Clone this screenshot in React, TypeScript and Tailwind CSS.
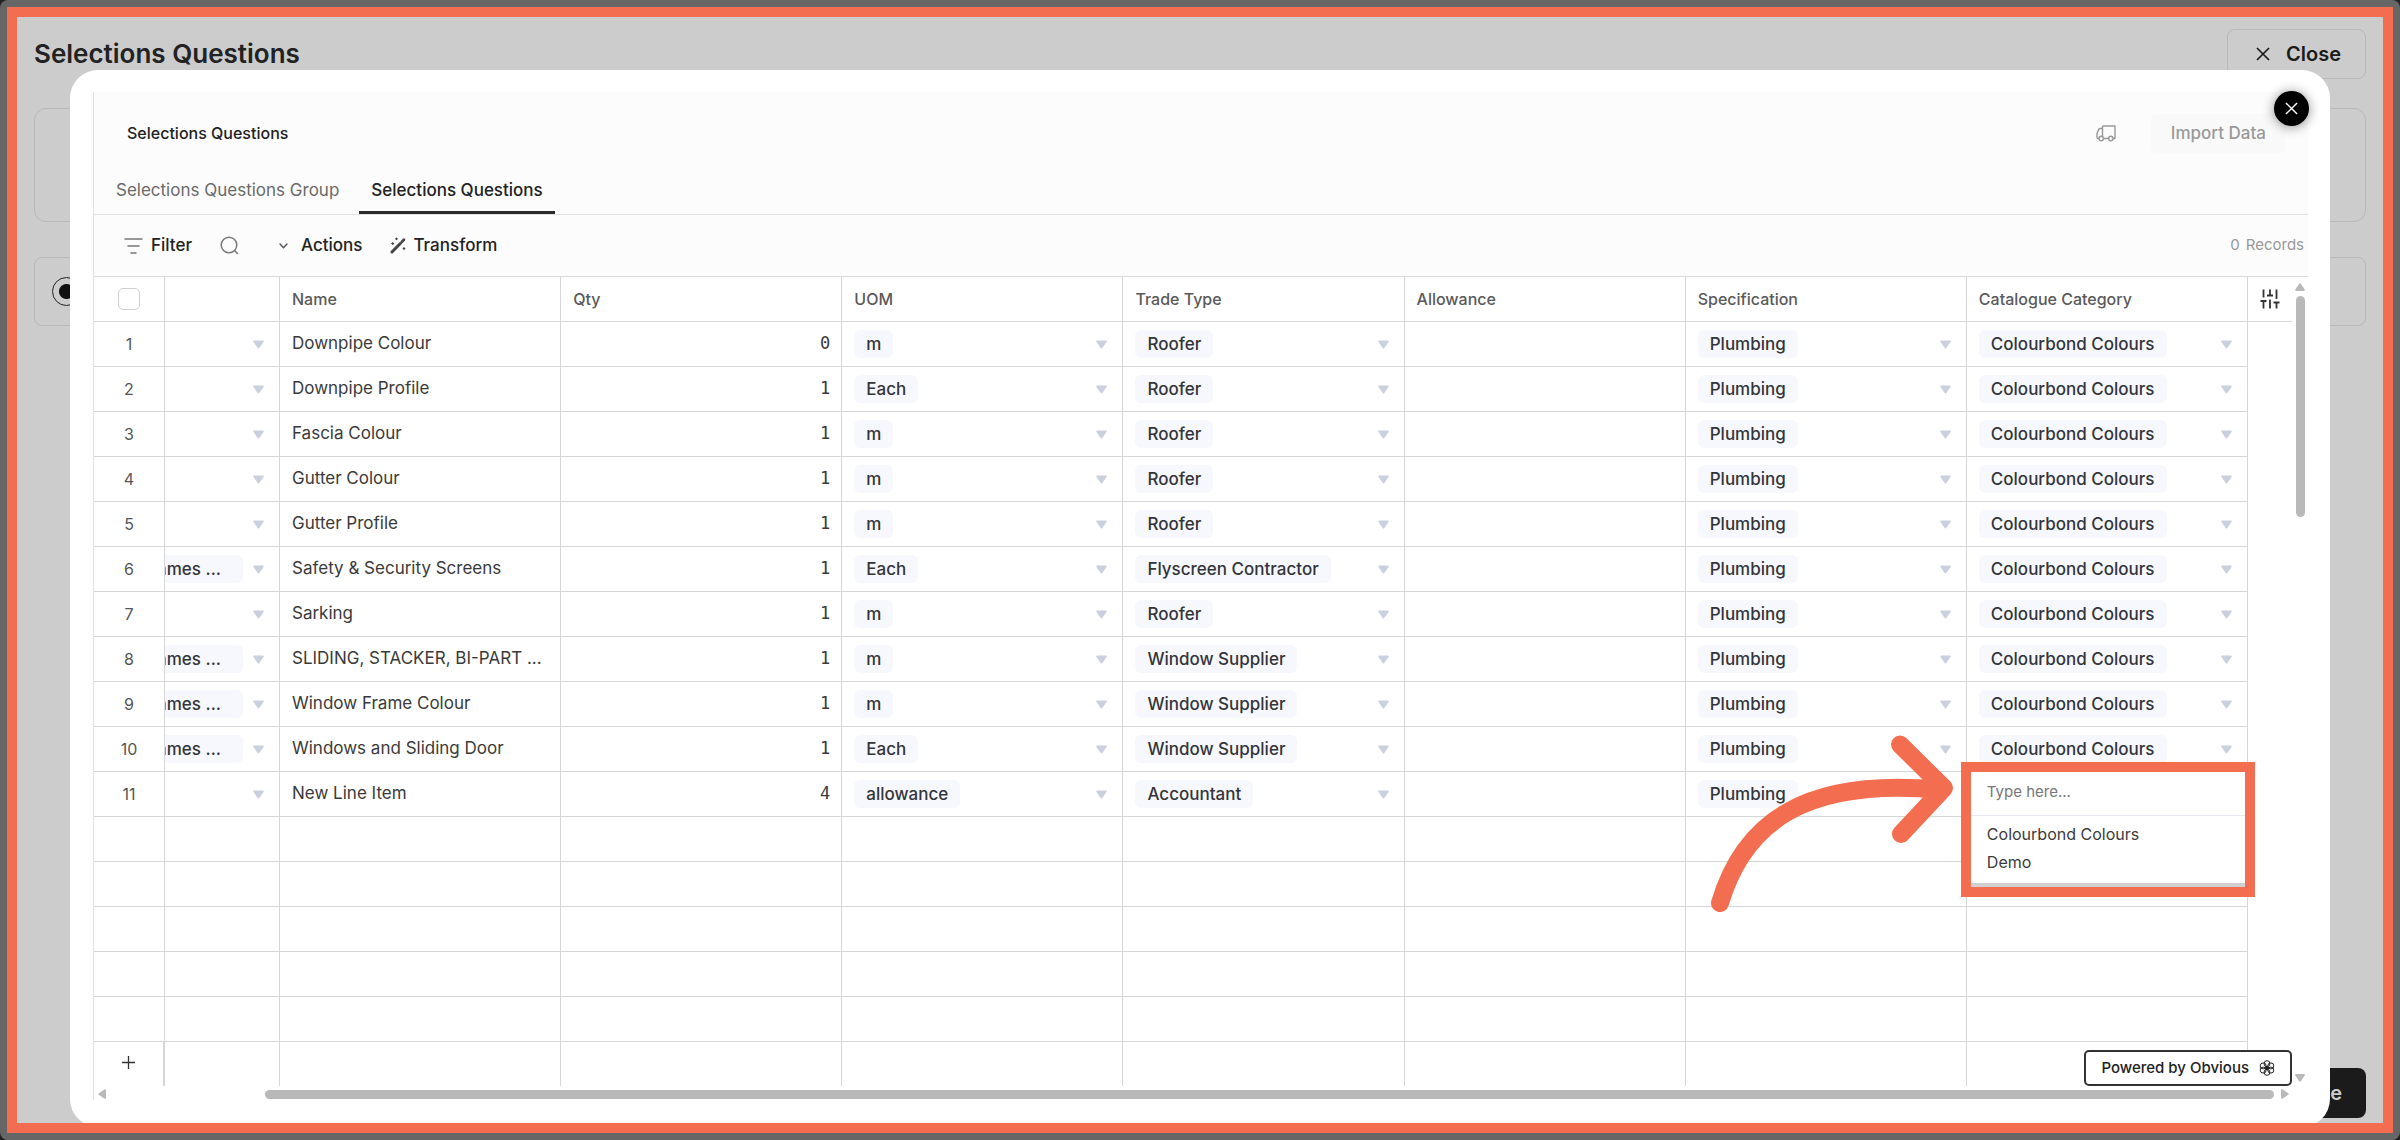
type Row = { group?: boolean; name: string; qty: number; uom: string; trade: string; category: boolean };

const rows: Row[] = [
  { name: "Downpipe Colour", qty: 0, uom: "m", trade: "Roofer", category: true },
  { name: "Downpipe Profile", qty: 1, uom: "Each", trade: "Roofer", category: true },
  { name: "Fascia Colour", qty: 1, uom: "m", trade: "Roofer", category: true },
  { name: "Gutter Colour", qty: 1, uom: "m", trade: "Roofer", category: true },
  { name: "Gutter Profile", qty: 1, uom: "m", trade: "Roofer", category: true },
  { group: true, name: "Safety & Security Screens", qty: 1, uom: "Each", trade: "Flyscreen Contractor", category: true },
  { name: "Sarking", qty: 1, uom: "m", trade: "Roofer", category: true },
  { group: true, name: "SLIDING, STACKER, BI-PART ...", qty: 1, uom: "m", trade: "Window Supplier", category: true },
  { group: true, name: "Window Frame Colour", qty: 1, uom: "m", trade: "Window Supplier", category: true },
  { group: true, name: "Windows and Sliding Door", qty: 1, uom: "Each", trade: "Window Supplier", category: true },
  { name: "New Line Item", qty: 4, uom: "allowance", trade: "Accountant", category: false },
];

const headings = ["Name", "Qty", "UOM", "Trade Type", "Allowance", "Specification", "Catalogue Category"];
const blankRows = [0, 1, 2, 3, 4];
const cell = "border-r border-b border-[#d6d6d6] p-0";

function Caret() {
  return (
    <svg className="ml-auto shrink-0" width="11" height="9" viewBox="0 0 11 9" fill="#cbd0df" aria-hidden="true">
      <path d="M1 0.5h9a.8.8 0 0 1 .7 1.2L6.300 7.900a1 1 0 0 1-1.600 0L.3 1.700A.8.8 0 0 1 1 .5z" />
    </svg>
  );
}

function Triangle({ className }: { className: string }) {
  return (
    <svg className={className} width="10" height="8" viewBox="0 0 10 8" fill="#b9b9b9" aria-hidden="true">
      <path d="M4.400 0.500Q5 0 5.600 0.500L9.800 6.600Q10 8 9 8H1Q0 8 .2 6.600z" />
    </svg>
  );
}

function Cross({ size, width }: { size: number; width: number }) {
  return (
    <svg width={size} height={size} viewBox="0 0 14 14" fill="none" stroke="currentColor" strokeWidth={width} aria-hidden="true">
      <path d="M1 1l12 12M13 1L1 13" />
    </svg>
  );
}

function ChipCell({ label }: { label: string }) {
  return (
    <div className="flex h-11 items-center pr-[15px] pl-3">
      <span className="rounded-md bg-[#f7f8fd] px-3 leading-7 font-medium whitespace-nowrap text-[#33353a]">{label}</span>
      <Caret />
    </div>
  );
}

function PointerArrow() {
  return (
    <svg
      className="pointer-events-none absolute -top-10 right-full z-10 mr-1"
      width="257"
      height="190"
      viewBox="0 0 257 190"
      fill="none"
      stroke="#f36e50"
      strokeWidth="18"
      strokeLinecap="round"
      strokeLinejoin="round"
      aria-hidden="true"
    >
      <path d="M14 171C38 90 100 45 235 58M194 12.500L238 56L195 102" />
    </svg>
  );
}

function Dropdown() {
  return (
    <div className="absolute -top-2.5 -right-2 -left-1.5 z-10 border-10 border-[#f36e50] bg-white">
      <input
        type="text"
        aria-label="Search catalogue category"
        placeholder="Type here..."
        className="block h-11 w-full border-b border-[#e6e8f0] px-4 pb-1 text-[15px] text-[#444] outline-none placeholder:text-[#777]"
      />
      <ul role="listbox" aria-label="Catalogue category" className="border-b-4 border-[#d0d0d0] pt-1 pb-[7px] text-base leading-7 text-[#3b3b3b]">
        <li role="option" aria-selected="false" className="px-4">Colourbond Colours</li>
        <li role="option" aria-selected="false" className="px-4">Demo</li>
      </ul>
    </div>
  );
}

function Grid() {
  return (
    <table className="w-full table-fixed border-separate border-spacing-0 text-[17px] text-[#3a3a3a]">
      <colgroup>
        <col className="w-[71px]" />
        <col className="w-[115px]" />
        {headings.map((h) => (
          <col key={h} />
        ))}
        <col className="w-11" />
      </colgroup>
      <thead>
        <tr className="h-[45px] text-left text-base text-[#5a5a5a]">
          <th className={cell}>
            <input
              type="checkbox"
              aria-label="Select all rows"
              className="mx-auto block size-[22px] appearance-none rounded-[5px] border border-[#cfcfcf] bg-white"
            />
          </th>
          <th className={cell} aria-label="Group" />
          {headings.map((h) => (
            <th key={h} className={`${cell} pl-3 font-medium`}>
              {h}
            </th>
          ))}
          <th className="border-b border-[#d6d6d6] p-0">
            <button type="button" aria-label="Column settings" className="mx-auto block">
              <svg width="20" height="20" viewBox="0 0 20 20" fill="none" stroke="#333" strokeWidth="1.8" aria-hidden="true">
                <path d="M3.500 .5v8M3.500 12v7.500M.5 12h6M10 .5v6M7 6.500h6M10 10.500v9M16.500 .5v9.500M16.500 13.500v6M13.500 13.500h6" />
              </svg>
            </button>
          </th>
        </tr>
      </thead>
      <tbody>
        {rows.map((r, i) => (
          <tr key={r.name} className="h-[45px]">
            <td className={`${cell} text-center text-base text-[#555]`}>{i + 1}</td>
            <td className={cell}>
              <div className="flex h-11 items-center overflow-hidden pr-[15px]">
                {r.group && (
                  <span className="-ml-3 flex w-[90px] justify-end rounded-md bg-[#f7f8fd] pr-[22px] leading-7 font-medium whitespace-nowrap text-[#33353a]">
                    Frames ...
                  </span>
                )}
                <Caret />
              </div>
            </td>
            <td className={cell}>
              <div className="flex h-11 items-center pl-3 whitespace-nowrap">{r.name}</div>
            </td>
            <td className={cell}>
              <div className="flex h-11 items-center justify-end pr-[11px] font-['DejaVu_Sans_Mono',monospace]">{r.qty}</div>
            </td>
            <td className={cell}>
              <ChipCell label={r.uom} />
            </td>
            <td className={cell}>
              <ChipCell label={r.trade} />
            </td>
            <td className={cell} />
            <td className={cell}>
              <ChipCell label="Plumbing" />
            </td>
            {r.category ? (
              <td className={cell}>
                <ChipCell label="Colourbond Colours" />
              </td>
            ) : (
              <td className={`${cell} relative`}>
                <PointerArrow />
                <Dropdown />
              </td>
            )}
            <td />
          </tr>
        ))}
        {blankRows.map((n) => (
          <tr key={n} className="h-[45px]">
            <td className={cell} />
            <td className={cell} />
            {headings.map((h) => (
              <td key={h} className={cell} />
            ))}
            <td />
          </tr>
        ))}
        <tr className="h-11">
          <td className="border-r-2 border-[#d6d6d6] p-0 pb-1">
            <button type="button" aria-label="Add row" className="mx-auto block text-[#333]">
              <svg width="13" height="13" viewBox="0 0 13 13" stroke="currentColor" strokeWidth="1.3" aria-hidden="true">
                <path d="M6.500 0v13M0 6.500h13" />
              </svg>
            </button>
          </td>
          <td className="border-r border-[#d6d6d6]" />
          {headings.map((h) => (
            <td key={h} className="border-r border-[#d6d6d6]" />
          ))}
          <td />
        </tr>
      </tbody>
    </table>
  );
}

function Toolbar() {
  return (
    <div className="flex h-[62px] items-center border-b border-[#dcdcdc] bg-[#fcfcfc] pr-1 pl-[30px] text-[17px] font-medium text-[#222]">
      <button type="button" className="flex items-center gap-2">
        <svg width="19" height="18" viewBox="0 0 19 18" fill="none" stroke="#777" strokeWidth="1.5" strokeLinecap="round" aria-hidden="true">
          <path d="M1 2h17M4 9h11M7 16h5" />
        </svg>
        Filter
      </button>
      <button type="button" aria-label="Search" className="ml-7">
        <svg width="19" height="19" viewBox="0 0 19 19" fill="none" stroke="#777" strokeWidth="1.5" strokeLinecap="round" aria-hidden="true">
          <circle cx="9" cy="9" r="7.8" />
          <path d="M14.500 14.500l3 3" />
        </svg>
      </button>
      <button type="button" className="ml-10 flex items-center gap-[13px]">
        <svg width="9" height="6" viewBox="0 0 9 6" fill="none" stroke="#555" strokeWidth="1.4" strokeLinecap="round" strokeLinejoin="round" aria-hidden="true">
          <path d="M1 1l3.500 3.700L8 1" />
        </svg>
        Actions
      </button>
      <button type="button" className="ml-7 flex items-center gap-[7px]">
        <svg width="16" height="17" viewBox="0 0 16 17" fill="none" stroke="#444" strokeLinecap="round" strokeLinejoin="round" aria-hidden="true">
          <path d="M2 15L10.300 6.500" strokeWidth="3" />
          <path d="M11.800 4.900L13.900 2.700" strokeWidth="2.800" />
          <path d="M6.500 1v1.600M5.700 1.800h1.600M2.700 5.700v1.800M1.800 6.600h1.800M14 10.600v1.800M13.100 11.500h1.800" strokeWidth="1.200" />
        </svg>
        Transform
      </button>
      <p className="ml-auto flex gap-1.5 text-[15px] font-normal text-[#999]">
        <span>0</span>
        <span>Records</span>
      </p>
    </div>
  );
}

function PanelHeader() {
  return (
    <header className="flex h-[123px] flex-col justify-between border-b border-[#e2e2e2] bg-[#fcfcfc] pt-[22px]">
      <div className="flex h-[39px] items-center pr-[22px] pl-[33px]">
        <h2 className="pb-0.5 text-base font-medium text-[#222]">Selections Questions</h2>
        <button type="button" aria-label="Delivery" className="ml-auto text-[#999]">
          <svg width="20" height="17" viewBox="0 0 20 17" fill="none" stroke="currentColor" strokeWidth="1.4" strokeLinejoin="round" aria-hidden="true">
            <path d="M6.500 1H19v12.500h-2M6.500 11.500V1M12.600 13.500H7.500M6.500 3.500H4.200Q3.200 3.500 2.800 4.400L1.300 7.600Q1 8.200 1 9v3.500q0 1 1 1h1" />
            <circle cx="5.200" cy="13.500" r="2.200" />
            <circle cx="14.800" cy="13.500" r="2.200" />
          </svg>
        </button>
        <button type="button" className="ml-[35px] h-full rounded-md bg-[#f9f9f9] px-5 text-[17px] font-medium text-[#999]">
          Import Data
        </button>
      </div>
      <nav className="flex gap-2 pl-[10px] text-[17px]" aria-label="Sheets">
        <button type="button" className="h-[43px] border-b-3 border-transparent px-3 text-[#6a6a6a]">
          Selections Questions Group
        </button>
        <button type="button" aria-current="page" className="h-[43px] border-b-3 border-[#2a2a2a] px-3 font-medium text-[#222]">
          Selections Questions
        </button>
      </nav>
    </header>
  );
}

function PoweredBy() {
  return (
    <a href="#" className="absolute right-0 bottom-0 z-20 flex h-9 items-center gap-2.5 rounded-[5px] border-2 border-[#333] bg-white px-[15px] text-[15px] font-medium text-[#222]">
      Powered by Obvious
      <svg width="16" height="16" viewBox="0 0 16 16" fill="none" stroke="#222" strokeWidth="1" aria-hidden="true">
        <circle cx="8" cy="3.700" r="3" />
        <circle cx="8" cy="12.300" r="3" />
        <circle cx="4.200" cy="5.900" r="3" />
        <circle cx="11.800" cy="5.900" r="3" />
        <circle cx="4.200" cy="10.100" r="3" />
        <circle cx="11.800" cy="10.100" r="3" />
        <circle cx="8" cy="8" r="1.800" fill="#222" stroke="none" />
      </svg>
    </a>
  );
}

function Modal() {
  return (
    <section
      role="dialog"
      aria-label="Import selections questions"
      className="absolute inset-x-[53px] top-[53px] -bottom-1 rounded-[28px] bg-white pt-[22px] pr-[22px] pb-[27px] pl-[23px]"
    >
      <div className="flex h-full flex-col border-l border-[#e0e0e0]">
        <PanelHeader />
        <Toolbar />
        <div className="flex min-h-0 flex-1">
          <div className="relative min-w-0 flex-1">
            <div className="h-full overflow-hidden">
              <Grid />
            </div>
            <PoweredBy />
          </div>
          <div className="flex w-4 flex-col items-center pt-1.5 pb-1">
            <Triangle className="" />
            <div className="mt-[5px] h-[221px] w-[9px] rounded-full bg-[#b9b9b9]" />
            <Triangle className="mt-auto rotate-180" />
          </div>
        </div>
        <div className="flex h-3.5 items-center pt-0.5 pr-[18px] pl-[3px]">
          <Triangle className="-rotate-90" />
          <div className="ml-[158px] h-[9px] flex-1 rounded-full bg-[#b9b9b9]" />
          <Triangle className="ml-[6px] rotate-90" />
        </div>
      </div>
      <button
        type="button"
        aria-label="Close dialog"
        className="absolute top-[21px] right-[21px] flex size-[35px] items-center justify-center rounded-full bg-black text-white shadow-[0_1px_12px_rgba(0,0,0,0.45)]"
      >
        <Cross size={13} width={1.6} />
      </button>
    </section>
  );
}

export default function App() {
  return (
    <div className="flex min-h-screen bg-[#222] font-['Inter','Liberation_Sans',sans-serif]">
      <div className="flex flex-1 rounded-lg bg-[#666] p-[7px]">
        <div className="relative flex flex-1 flex-col overflow-hidden border-10 border-[#f36e50] bg-[#ccc] px-[17px] pt-3 pb-[5px]">
          <header className="flex h-[50px] items-center justify-between">
            <h1 className="pb-0.5 text-[26px] font-semibold text-[#222]">Selections Questions</h1>
            <button type="button" className="flex h-full items-center gap-4 rounded-lg border border-[#b8b8b8] pr-6 pl-7 text-xl font-semibold text-[#1b1b1b]">
              <Cross size={14} width={1.7} />
              Close
            </button>
          </header>
          <div className="mt-[29px] h-[114px] rounded-xl border border-[#b8b8b8]" />
          <div className="mt-[35px] flex h-[69px] items-center rounded-lg border border-[#b8b8b8] pl-[17px]">
            <input
              type="radio"
              defaultChecked
              aria-label="Selected source"
              className="size-[29px] appearance-none rounded-full border border-[#222] bg-[radial-gradient(circle,#111_0_7px,transparent_8px)]"
            />
          </div>
          <button type="button" className="mt-auto h-[50px] self-end rounded-lg bg-[#1b1b1b] px-6 text-xl font-semibold text-[#ccc]">
            Done
          </button>
          <Modal />
        </div>
      </div>
    </div>
  );
}
